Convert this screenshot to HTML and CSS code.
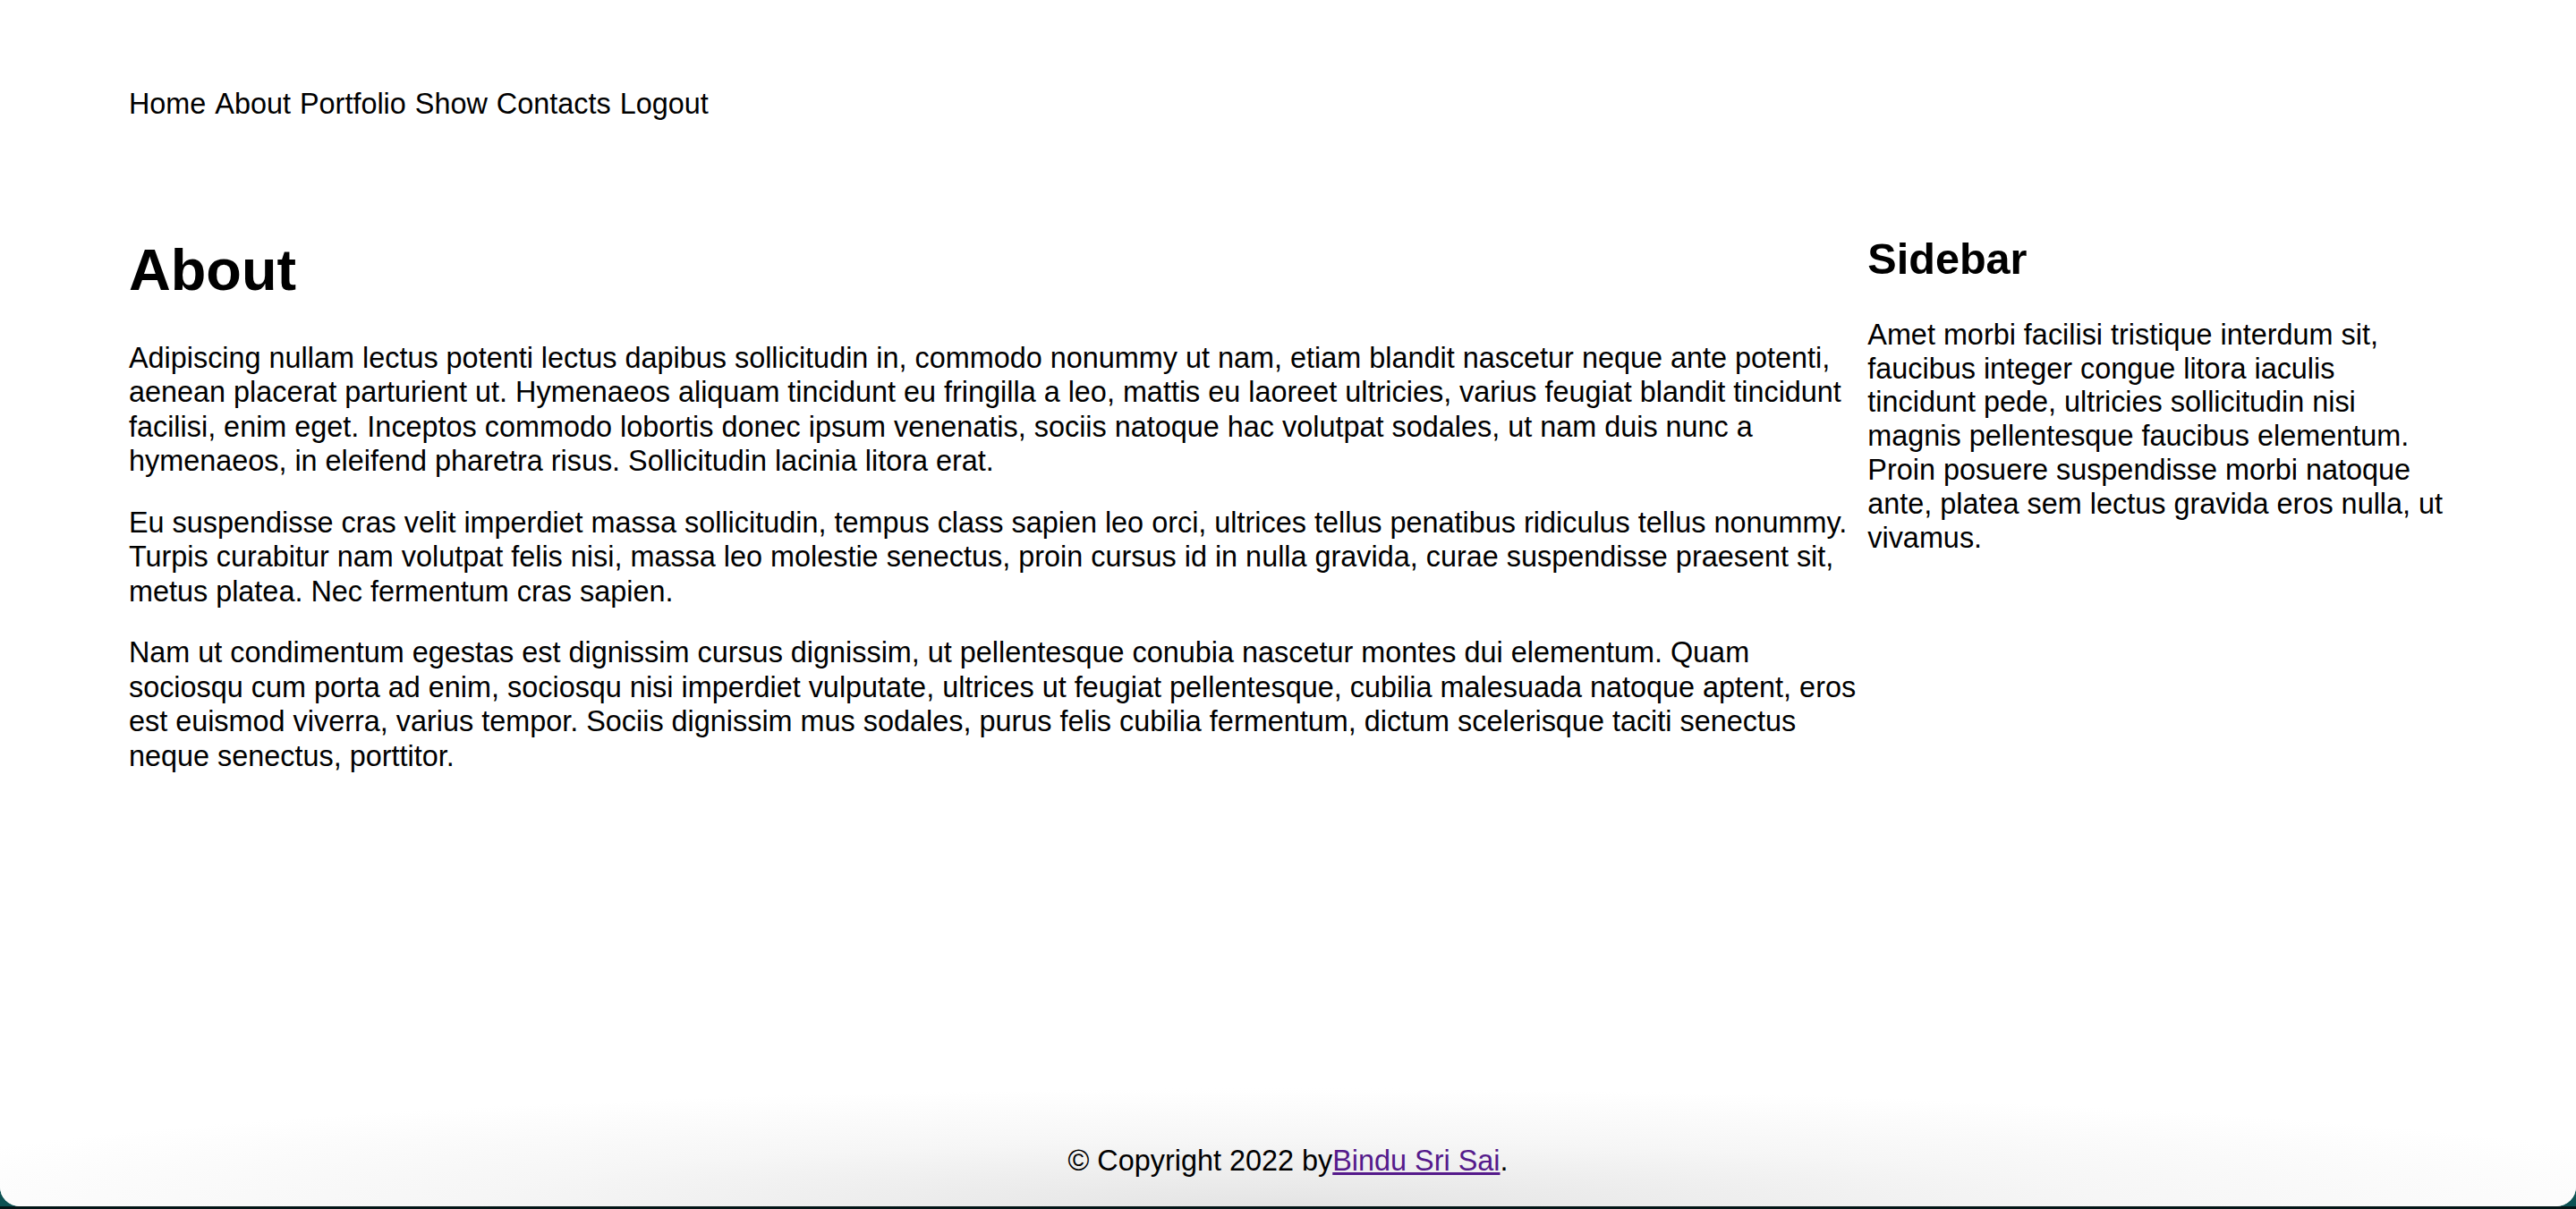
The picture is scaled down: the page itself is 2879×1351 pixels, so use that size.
FILE: index.html
```html
<!DOCTYPE html>
<html lang="en">
<head>
<meta charset="utf-8">
<title>About</title>
<link rel="stylesheet" href="styles.css">
</head>
<body>
<div class="page">
  <header class="site-header">
    <nav class="nav">
      <a href="#">Home</a>
      <a href="#">About</a>
      <a href="#">Portfolio</a>
      <a href="#">Show</a>
      <a href="#">Contacts</a>
      <a href="#">Logout</a>
    </nav>
  </header>
  <div class="layout">
    <main class="content">
      <h1>About</h1>
      <p>Adipiscing nullam lectus potenti lectus dapibus sollicitudin in, commodo nonummy ut nam, etiam blandit nascetur neque ante potenti, aenean placerat parturient ut. Hymenaeos aliquam tincidunt eu fringilla a leo, mattis eu laoreet ultricies, varius feugiat blandit tincidunt facilisi, enim eget. Inceptos commodo lobortis donec ipsum venenatis, sociis natoque hac volutpat sodales, ut nam duis nunc a hymenaeos, in eleifend pharetra risus. Sollicitudin lacinia litora erat.</p>
      <p>Eu suspendisse cras velit imperdiet massa sollicitudin, tempus class sapien leo orci, ultrices tellus penatibus ridiculus tellus nonummy. Turpis curabitur nam volutpat felis nisi, massa leo molestie senectus, proin cursus id in nulla gravida, curae suspendisse praesent sit, metus platea. Nec fermentum cras sapien.</p>
      <p>Nam ut condimentum egestas est dignissim cursus dignissim, ut pellentesque conubia nascetur montes dui elementum. Quam sociosqu cum porta ad enim, sociosqu nisi imperdiet vulputate, ultrices ut feugiat pellentesque, cubilia malesuada natoque aptent, eros est euismod viverra, varius tempor. Sociis dignissim mus sodales, purus felis cubilia fermentum, dictum scelerisque taciti senectus neque senectus, porttitor.</p>
    </main>
    <aside class="sidebar">
      <h2>Sidebar</h2>
      <p>Amet morbi facilisi tristique interdum sit, faucibus integer congue litora iaculis tincidunt pede, ultricies sollicitudin nisi magnis pellentesque faucibus elementum. Proin posuere suspendisse morbi natoque ante, platea sem lectus gravida eros nulla, ut vivamus.</p>
    </aside>
  </div>
  <footer class="site-footer">
    <p>© Copyright 2022 by<a href="#" class="author">Bindu Sri Sai</a>.</p>
  </footer>
</div>
</body>
</html>
```

FILE: styles.css
```css
html {
  height: 100%;
  background: linear-gradient(to bottom, #0d5253 0, #0d5253 1348px, #041617 1348px);
}

body {
  margin: 0;
  font-family: "Liberation Sans", Arial, Helvetica, sans-serif;
  font-size: 32.4px;
  line-height: 38.5px;
  color: #000;
}

.page {
  height: 1348px;
  box-sizing: border-box;
  background: #fff;
  border-radius: 0 0 22px 22px;
  overflow: hidden;
  display: flex;
  flex-direction: column;
}

.site-header {
  padding: 97px 5% 0;
}

.nav {
  display: flex;
  gap: 10px;
}

.nav a {
  color: #000;
  text-decoration: none;
}

.layout {
  flex: 1;
  display: flex;
  padding: 87px 5% 0;
}

.content {
  width: 75%;
}

.sidebar {
  width: 25%;
}

.sidebar p {
  line-height: 37.9px;
}

h1 {
  font-size: 2em;
  line-height: 1.1;
  margin: 0.67em 0;
  font-weight: bold;
}

h2 {
  font-size: 1.5em;
  line-height: 1.08;
  margin: 0.83em 0;
  font-weight: bold;
}

p {
  margin: 30px 0;
}

.site-footer {
  height: 100px;
  display: flex;
  align-items: flex-end;
  justify-content: center;
  padding-bottom: 32px;
  box-sizing: content-box;
  background: radial-gradient(ellipse 58% 100% at 50% 100%, #e4e4e4 0%, #f6f6f6 55%, #ffffff 100%);
}

.site-footer p {
  margin: 0;
}

.author {
  color: #551a8b;
  text-decoration: underline;
}
```
